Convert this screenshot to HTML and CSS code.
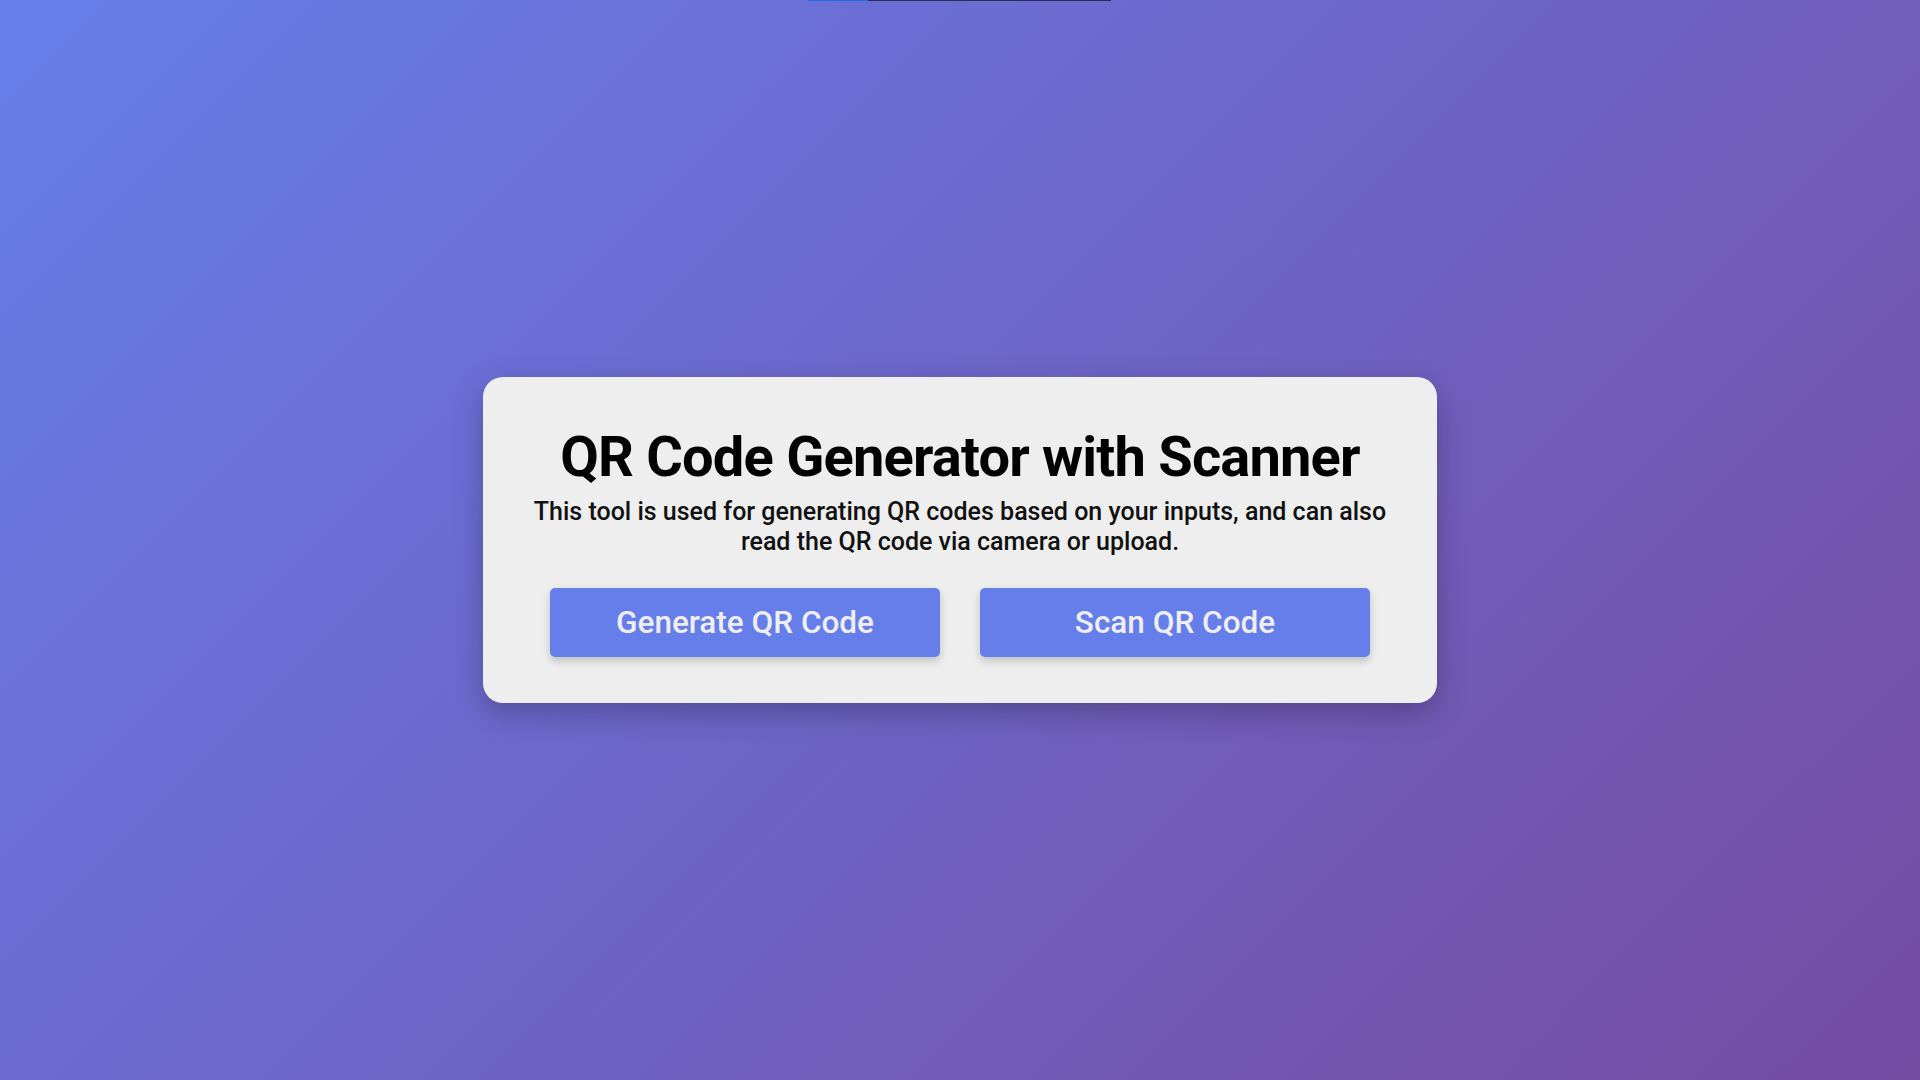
FILE: index.html
```html
<!DOCTYPE html>
<html lang="en">
<head>
    <meta charset="UTF-8">
    <meta name="viewport" content="width=device-width, initial-scale=1.0">
    <link rel="stylesheet" href="styles.css">
    <title>QR Code Generator with Scanner</title>
</head>
<body>
    <div class="top-bar"><span class="top-bar-fill"></span></div>

    <div class="card">
        <h1>QR Code Generator with Scanner</h1>
        <p>This tool is used for generating QR codes based on your inputs, and can also read the QR code via camera or upload.</p>

        <div class="buttons">
            <button id="generate-button">Generate QR Code</button>
            <button id="scan-button">Scan QR Code</button>
        </div>
    </div>
</body>
</html>
```

FILE: styles.css
```css
* {
  box-sizing: border-box;
  margin: 0;
  padding: 0;
}

body {
  font-family: Roboto, "Liberation Sans", Arial, sans-serif;
  min-height: 100vh;
  background: linear-gradient(135deg, #667eea 0%, #764ba2 100%);
  display: flex;
  align-items: center;
  justify-content: center;
}

.top-bar {
  position: absolute;
  top: 0;
  left: 808px;
  width: 303px;
  height: 1px;
  background: #2b2d5c;
}

.top-bar-fill {
  display: block;
  width: 60px;
  height: 1px;
  background: #1e6fd9;
}

.card {
  width: 954px;
  background: #eee;
  border-radius: 20px;
  padding: 47px 40px 46px;
  text-align: center;
  box-shadow: 0 10px 30px rgba(0, 0, 0, 0.25);
}

h1 {
  font-size: 56px;
  font-weight: 700;
  letter-spacing: -0.8px;
  color: #000;
}

p {
  font-size: 25px;
  font-weight: 500;
  line-height: 30px;
  color: #111;
  margin-top: 7px;
}

.buttons {
  display: flex;
  justify-content: center;
  gap: 40px;
  margin-top: 31px;
}

button {
  cursor: pointer;
  width: 390px;
  height: 69px;
  background: #667eea;
  color: #eee;
  border: 0;
  border-radius: 5px;
  font-family: inherit;
  font-size: 31.5px;
  font-weight: 500;
  box-shadow: 0 4px 8px rgba(0, 0, 0, 0.2);
}
```
